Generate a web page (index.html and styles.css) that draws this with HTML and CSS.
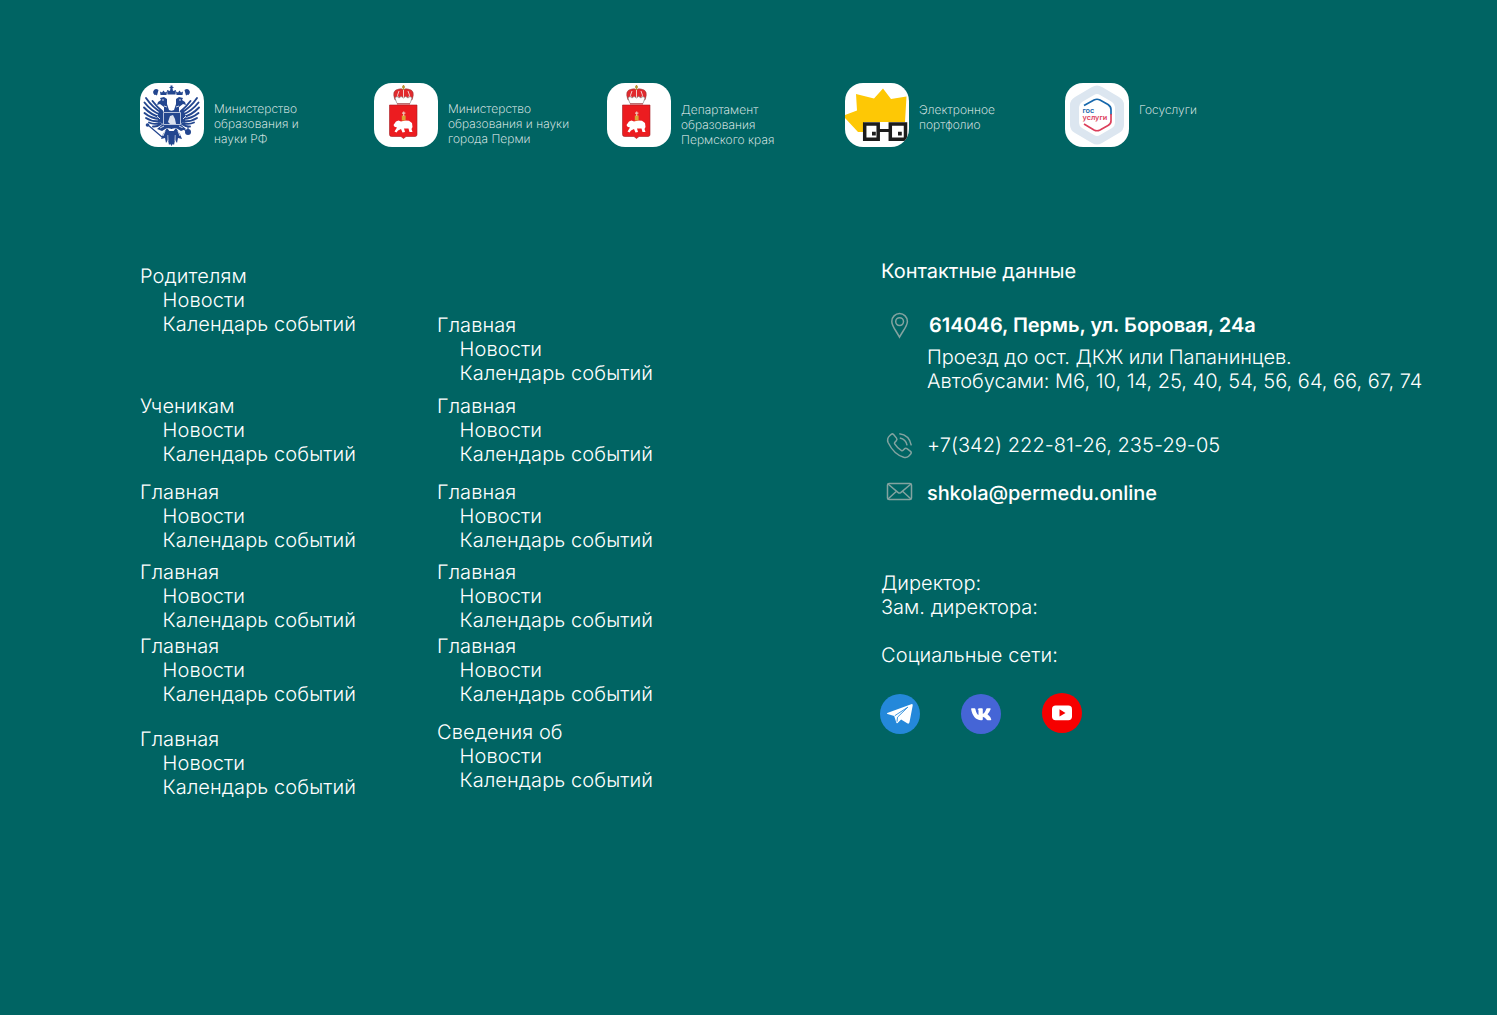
FILE: index.html
```html
<!DOCTYPE html>
<html lang="ru">
<head>
<meta charset="utf-8">
<title>Контакты школы</title>
<link rel="stylesheet" href="styles.css">
</head>
<body>
<svg class="defs" aria-hidden="true">
  <defs>
    <g id="wing" fill="#23468f">
      <path d="M22 30Q12 24 6 15M21 32Q11 28 4.500 19.500M20 34Q11 32 4 24.500M20 36Q11 35.500 4.500 30M20 38Q12 39 6 35M20 40Q14 42 9 39.500M21 41Q17 44 13 43.500M22 28Q17 24 12.500 18" fill="none" stroke="#23468f" stroke-width="1.900" stroke-linecap="round"/>
      <path d="M23 41 18 38 18 31 20 26 24 29 24 24 20 21 17 22 18 19 21 17 20 15 24 14 27 16 27 21 29 27 32 28V46L27 45 22 48 17 46Z"/>
      <path d="M27 45 31 50 31 60 29 62 28 57 26 60 25 55 21 56 23 51Z"/>
      <path d="M17 12.500Q12 11 14 7 16 5 18.500 7M20.500 12 20 8.500 22 9.500 23.500 7.500 25 9.500 27 8.500 26.500 12Z"/>
      <path d="M15 7.500Q13 9 15 11.500" fill="none" stroke="#23468f" stroke-width="1.500"/>
      <path d="M17 33 20 36M25 48 23 53M28 52v6M24 43l-4 2M27 24l-3-1M22 17h2" fill="none" stroke="#fff" stroke-width=".8"/>
    </g>
    <g id="perm">
      <path d="M15.500 22h27.500v29.500q0 2-2 2H32l-2.500 2-2.500-2h-9.500q-2 0-2-2z" fill="#ec1c20" stroke="#a51d22" stroke-width=".6"/>
      <path d="M21 17q-4-10 4-11 3-1 4.500 1 1.500-2 4.500-1 8 1 4 11z" fill="#e12a2e" stroke="#8b4143" stroke-width=".5"/>
      <path d="M29.500 6v12M25 8q-3 4 0 9M34 8q3 4 0 9" fill="none" stroke="#f6dede" stroke-width=".9"/>
      <path d="M29.500 2v5M28 4h3" stroke="#b89332" stroke-width="1.400"/>
      <path d="M21 15q2-3 4 0 2-3 4.500 0 2-3 4.500 0 2-3 4 0l-2 5.500H23z" fill="#fff" stroke="#777" stroke-width=".6"/>
      <path d="M23 21h13" stroke="#c7363a" stroke-width="1.200"/>
      <path d="M19.500 42 22 38.500 24.500 37.500 27 38.500 31 37.500 35 37.800 38 40 38.500 44 37.500 46 38.500 49 35.500 49 34.500 45.500 30 45.500 31 49 28.500 49.500 27 46 24 47.500 22.500 49.500 20.500 48.500 23 44.500 20.500 43.800Z" fill="#fff"/>
      <path d="M27.800 32.500h3.800V37.500h-3.800z" fill="#dca437"/>
      <path d="M29.700 28.500v4.500M28 30.200h3.400" stroke="#f0c3b5" stroke-width="1.200"/>
    </g>
  </defs>
</svg>
<footer class="footer">
  <div class="partners">
    <a class="partner partner-ministry">
      <svg class="logo" viewBox="0 0 64 64">
        <use href="#wing"/><use href="#wing" transform="matrix(-1 0 0 1 63 0)"/>
        <g fill="#23468f">
          <path d="M27.500 11.500 27 7 30 8 30.500 5H29.500V4H30.500V2.500h2V4h1v1h-1L33 8l3-1-.5 4.500Z"/>
          <path d="M28 48h7l-1 11-2.500 4-2.500-4z"/>
          <circle cx="7.500" cy="42" r="1.800"/><circle cx="48" cy="49" r="3"/>
        </g>
        <path d="m8 42 14 12M48 49l-6-4M48 44v5" stroke="#23468f" stroke-width="1.200"/>
        <path d="M23.500 29.500h17v12h-17z" fill="none" stroke="#b6c2dc"/>
        <path d="m30 33 3-1 2 4 1 5h-6l-2-2z" fill="#dce2ef"/>
      </svg>
      <span class="caption">Министерство<br>образования и<br>науки РФ</span>
    </a>
    <a class="partner partner-city">
      <svg class="logo" viewBox="0 0 64 64"><use href="#perm"/></svg>
      <span class="caption">Министерство<br>образования и науки<br>города Перми</span>
    </a>
    <a class="partner partner-region">
      <svg class="logo" viewBox="0 0 64 64"><use href="#perm"/></svg>
      <span class="caption caption-low">Департамент<br>образования<br>Пермского края</span>
    </a>
    <a class="partner partner-portfolio">
      <svg class="logo" viewBox="0 0 64 64">
        <path d="M0 32 12 27.500 11 11 29 15.500 38 5.500 46 16 61.500 13.500 60 39H19v10h-6L0 35Z" fill="#fec805"/>
        <path d="M19.700 41h13.500v15.300H19.700zM45.300 41h15.200v15.300H45.300z" fill="#fff" stroke="#1c1c1c" stroke-width="3.500"/>
        <path d="M34 47.500h11" stroke="#1c1c1c" stroke-width="3"/>
        <path d="M27 48.700h3.800v3.800H27zM53 48.700h3.800v3.800H53z" fill="#1c1c1c"/>
      </svg>
      <span class="caption caption-low">Электронное<br>портфолио</span>
    </a>
    <a class="partner partner-services">
      <svg class="logo" viewBox="0 0 64 64">
        <path d="M27 4q5-3 10 0l17 10q5 3 5 8v20q0 5-5 8L37 60q-5 3-10 0L10 50q-5-3-5-8V22q0-5 5-8Z" fill="#dce6f0"/>
        <path d="M29 12q3-2 6 0l12 7q3 2 3 5v16q0 3-3 5l-12 7q-3 2-6 0l-12-7q-3-2-3-5V24q0-3 3-5Z" fill="#fff"/>
        <path d="M19 22.500 29 17q3-1.500 6 0l8 4.500q3 2 3 5V32" fill="none" stroke="#1768ac" stroke-width="1.700"/>
        <path d="M46 31v7q0 3-3 4.500L35 47q-3 1.500-6 0l-10-6" fill="none" stroke="#dc405c" stroke-width="1.700"/>
        <text class="gos-text"><tspan x="17.500" y="30.300" fill="#1768ac">гос</tspan><tspan x="17.500" y="36.500" fill="#dc405c">услуги</tspan></text>
      </svg>
      <span class="caption caption-low">Госуслуги</span>
    </a>
  </div>

  <div class="content">
    <nav class="menu menu-first">
      <ul class="group"><li>Родителям</li><li class="sub">Новости</li><li class="sub">Календарь событий</li></ul>
      <ul class="group gap-xl"><li>Ученикам</li><li class="sub">Новости</li><li class="sub">Календарь событий</li></ul>
      <ul class="group gap-m"><li>Главная</li><li class="sub">Новости</li><li class="sub">Календарь событий</li></ul>
      <ul class="group gap-s"><li>Главная</li><li class="sub">Новости</li><li class="sub">Календарь событий</li></ul>
      <ul class="group gap-xs"><li>Главная</li><li class="sub">Новости</li><li class="sub">Календарь событий</li></ul>
      <ul class="group gap-l"><li>Главная</li><li class="sub">Новости</li><li class="sub">Календарь событий</li></ul>
    </nav>
    <nav class="menu menu-second">
      <ul class="group"><li>Главная</li><li class="sub">Новости</li><li class="sub">Календарь событий</li></ul>
      <ul class="group gap-top"><li>Главная</li><li class="sub">Новости</li><li class="sub">Календарь событий</li></ul>
      <ul class="group gap-m"><li>Главная</li><li class="sub">Новости</li><li class="sub">Календарь событий</li></ul>
      <ul class="group gap-s"><li>Главная</li><li class="sub">Новости</li><li class="sub">Календарь событий</li></ul>
      <ul class="group gap-xs"><li>Главная</li><li class="sub">Новости</li><li class="sub">Календарь событий</li></ul>
      <ul class="group gap-m"><li>Сведения об</li><li class="sub">Новости</li><li class="sub">Календарь событий</li></ul>
    </nav>
    <section class="contacts">
      <h2 class="title">Контактные данные</h2>
      <div class="contact">
        <svg class="icon" viewBox="0 0 26 26"><path d="M13.500 24.200C10 17.500 5.800 13 5.800 8.400a7.800 7.800 0 0 1 15.600 0c0 4.600-4.400 9.100-7.900 15.800Z"/><circle cx="13.600" cy="8.600" r="3.900"/></svg>
        <div>
          <p class="address">614046, Пермь, ул. Боровая, 24а</p>
          <p class="route"><span class="stops">Проезд до ост. ДКЖ или Папанинцев.</span><br>Автобусами: М6, 10, 14, 25, 40, 54, 56, 64, 66, 67, 74</p>
        </div>
      </div>
      <div class="contact contact-phone">
        <svg class="icon" viewBox="0 0 26 26"><path d="M3.900 2.500 5.500 1.100Q6.500.5 7.600 1.500L10.500 5.100q1 1.300-.2 2.600L8.700 9.500q-.5.700 0 1.400 2.600 4.200 6.800 6.700.9.500 1.600-.3l1.300-1.400q1.200-1.200 2.600-.2l3.500 2.700q1.400 1.200.2 2.500l-2.100 2.300q-1.700 1.700-4.900 1Q8 21.500 2.100 9.500q-1.500-4.200 1.800-7ZM13.800 4.900q6.200 1.300 7.300 7.400M13.300.8q10 1.200 12 11.500"/></svg>
        <p class="phone">+7(342) 222-81-26, 235-29-05</p>
      </div>
      <div class="contact contact-mail">
        <svg class="icon" viewBox="0 0 26 26"><rect x="1.500" y="2.500" width="24" height="16" rx="1.600"/><path d="m2 3 10.200 8.600q1.200 1 2.500 0L25 3M2 18l8.200-7.500M25 18l-8.200-7.500"/></svg>
        <p class="mail">shkola@permedu.online</p>
      </div>
      <p class="staff">Директор:<br>Зам. директора:</p>
      <p class="social-title">Социальные сети:</p>
      <div class="socials">
        <svg class="social" viewBox="0 0 40 40"><circle cx="20" cy="20" r="20" fill="#2488da"/><path d="M7.200 19 31.200 10.200q1.700-.5 1.500 1.200L29.500 28.300q-.6 2-2.300 1l-6.100-3.700-3.500 3.300q-1 .8-1.400-.6L14.200 22 7.500 20q-1-.5-.3-1Z" fill="#fff"/><path d="m14.800 21.700 13-8.500-10.300 10-.5 4.500" fill="none" stroke="#2488da" stroke-width=".9"/></svg>
        <svg class="social" viewBox="0 0 40 40"><circle cx="20" cy="20" r="20" fill="#4565d6"/><path d="M20 26.200c-5.300 0-8.600-4.200-9.900-11.100q-.1-.8.700-.8h2.700q.7 0 .9.800c.7 3.600 2 5.800 3.100 6v-4.600q0-.9-.9-1.200.7-1 2-1h2.200q1 0 1 1v4.800c1.400-.5 2.600-2.500 3.400-5q.2-.8 1-.8h2.800q.9 0 .6.900-.9 2.500-3.100 5 2.700 2.100 3.700 5 .3 1-.8 1h-2.700q-.8 0-1.200-.7-1.500-2.300-3.700-2.800v2.600q0 .9-.9.900Z" fill="#fff"/></svg>
        <svg class="social social-video" viewBox="0 0 40 40"><circle cx="20" cy="20" r="20" fill="#f60000"/><rect x="10" y="12.500" width="20" height="14.800" rx="3.700" fill="#fff"/><path d="m17.500 16.300 6 3.600-6 3.600z" fill="#f60000"/></svg>
      </div>
    </section>
  </div>
</footer>
</body>
</html>
```
FILE: styles.css
```css
body {
  margin: 0;
  background: #006463;
  color: #fff;
  font-family: Inter, "Liberation Sans", sans-serif;
  font-size: 20px;
  font-weight: 300;
  line-height: 24px;
  text-rendering: geometricPrecision;
}
p, h2, ul {
  margin: 0;
  padding: 0;
}
ul { list-style: none; }
.defs {
  display: block;
  width: 0;
  height: 0;
}
.footer {
  box-sizing: border-box;
  min-height: 1015px;
  padding: 83px 0 0 140px;
}
.partners {
  display: grid;
  grid-template-columns: 234px 233px 238px 220px 200px;
  height: 64px;
}
.partner {
  display: flex;
  gap: 10px;
}
.logo {
  flex: none;
  width: 64px;
  height: 64px;
  border-radius: 18px;
  background: #fff;
}
.gos-text {
  font-size: 7.3px;
  font-weight: 600;
}
.caption {
  padding-top: 18px;
  font-size: 12px;
  font-weight: 200;
  line-height: 15px;
  letter-spacing: 0.06px;
  white-space: nowrap;
}
.caption-low { padding-top: 19px; }
.content {
  display: grid;
  grid-template-columns: 297px 444px 1fr;
  padding-top: 112px;
  white-space: nowrap;
}
.menu { letter-spacing: 0.1px; }
.menu-first { padding-top: 5px; }
.menu-second { padding-top: 54px; }
.sub { padding-left: 22.6px; }
.gap-xs { padding-top: 2px; }
.gap-s { padding-top: 8px; }
.gap-top { padding-top: 9px; }
.gap-m { padding-top: 14px; }
.gap-l { padding-top: 21px; }
.gap-xl { padding-top: 58px; }
.title {
  font-size: 20px;
  font-weight: 400;
}
.contact {
  display: flex;
  gap: 15px;
  padding: 30px 0 0 5px;
}
.icon {
  flex: none;
  width: 26px;
  height: 26px;
  overflow: visible;
  fill: none;
  stroke: #83a3a0;
  stroke-width: 1.5;
}
.address {
  padding-left: 2px;
  font-weight: 600;
  letter-spacing: -0.04px;
}
.route { padding-top: 8px; }
.stops { letter-spacing: -0.07px; }
.contact-phone { padding-top: 40px; }
.phone { letter-spacing: 0.05px; }
.contact-mail { padding-top: 22px; }
.mail {
  font-weight: 500;
  letter-spacing: -0.09px;
}
.staff { padding-top: 64px; }
.social-title {
  padding-top: 24px;
  letter-spacing: 0.12px;
}
.socials {
  display: flex;
  gap: 41px;
  padding-top: 27px;
  margin-left: -1px;
}
.social {
  width: 40px;
  height: 40px;
}
.social-video { margin-top: -1px; }
```
